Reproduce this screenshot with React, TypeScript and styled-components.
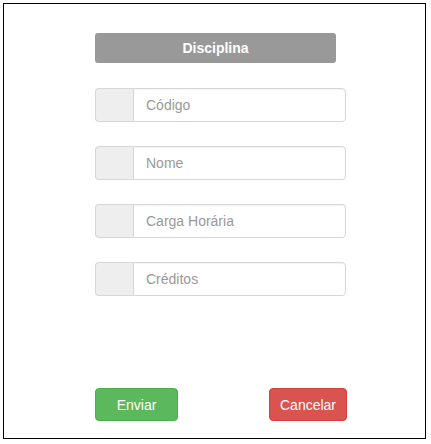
import React from "react";
import styled, { createGlobalStyle } from "styled-components";

const Global = createGlobalStyle`
  html, body { margin: 0; padding: 0; background: #fff; }
  body { font-family: "Liberation Sans", Arial, sans-serif; }
  * { box-sizing: border-box; }
`;

const Frame = styled.div`
  margin: 3px 0 0 3px;
  width: 423px;
  height: 436px;
  border: 1.5px solid #000;
  padding: 29px 0 0 91px;
  display: flex;
  flex-direction: column;
`;

const Title = styled.div`
  width: 241px;
  height: 30px;
  background: #999;
  border-radius: 3px;
  color: #fff;
  font-weight: bold;
  font-size: 14px;
  display: flex;
  align-items: center;
  justify-content: center;
`;

const Fields = styled.div`
  margin-top: 25px;
  display: flex;
  flex-direction: column;
  gap: 24px;
`;

const Group = styled.div`
  display: flex;
  width: 251px;
  height: 34px;
`;

const Addon = styled.span`
  width: 38px;
  background: #eee;
  border: 1px solid #d6d6d6;
  border-right: 0;
  border-radius: 4px 0 0 4px;
`;

const Input = styled.input`
  flex: 1;
  min-width: 0;
  border: 1px solid #d6d6d6;
  border-radius: 0 4px 4px 0;
  padding: 6px 12px;
  font-family: "Liberation Sans", Arial, sans-serif;
  font-size: 14px;
  color: #555;
  outline: none;
  box-shadow: inset 0 1px 1px rgba(0, 0, 0, 0.05);
  &::placeholder { color: #999; }
`;

const Actions = styled.div`
  margin-top: auto;
  margin-bottom: 17px;
  display: flex;
  gap: 91px;
`;

const Button = styled.button<{ $bg: string; $border: string; $w: number }>`
  width: ${(p) => p.$w}px;
  height: 33px;
  background: ${(p) => p.$bg};
  border: 1px solid ${(p) => p.$border};
  border-radius: 4px;
  color: #fff;
  font-family: "Liberation Sans", Arial, sans-serif;
  font-size: 14px;
  padding: 0;
`;

const fields = ["Código", "Nome", "Carga Horária", "Créditos"];

export default function App() {
  return (
    <>
      <Global />
      <Frame>
        <Title>Disciplina</Title>
        <Fields>
          {fields.map((f) => (
            <Group key={f}>
              <Addon />
              <Input placeholder={f} />
            </Group>
          ))}
        </Fields>
        <Actions>
          <Button $bg="#5cb85c" $border="#4cae4c" $w={83}>Enviar</Button>
          <Button $bg="#d9534f" $border="#d43f3a" $w={78}>Cancelar</Button>
        </Actions>
      </Frame>
    </>
  );
}
